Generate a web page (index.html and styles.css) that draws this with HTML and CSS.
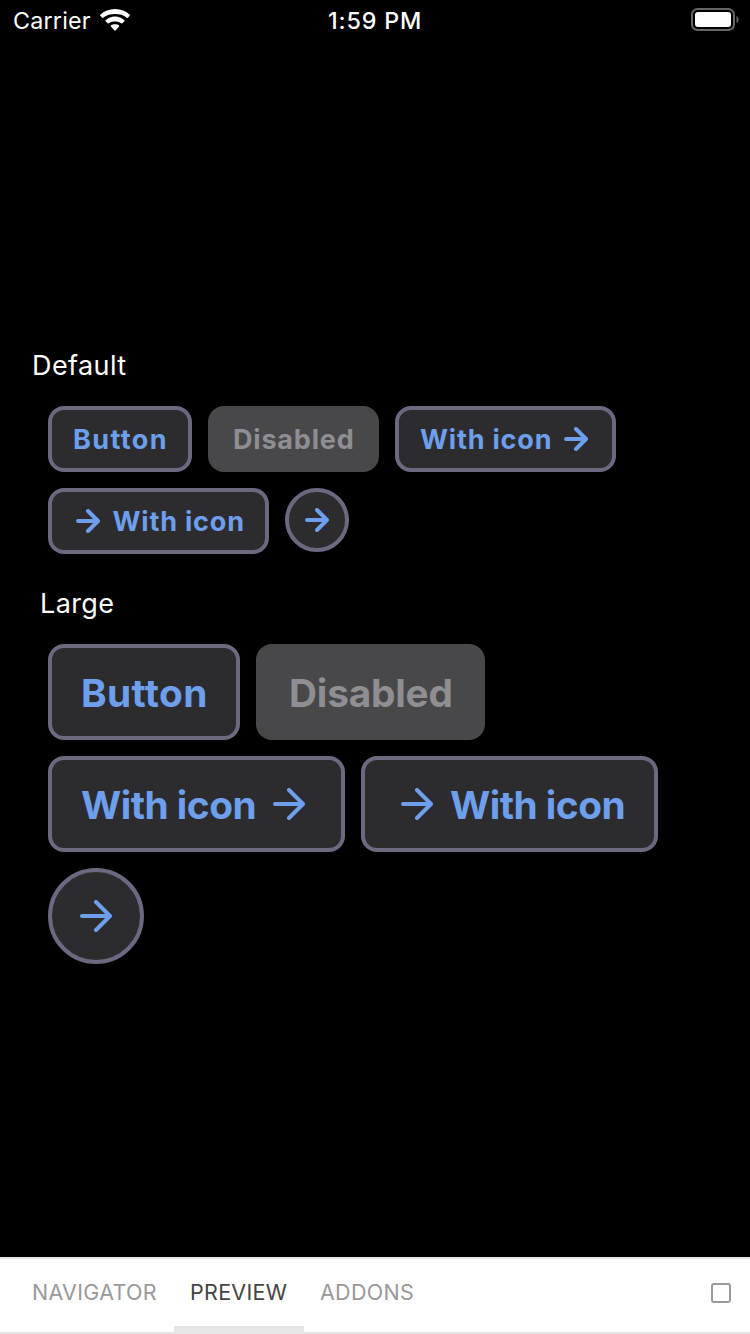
FILE: index.html
```html
<!DOCTYPE html>
<html lang="en">
<head>
<meta charset="utf-8">
<title>Buttons</title>
<link rel="stylesheet" href="styles.css">
</head>
<body>
<svg class="defs" width="0" height="0">
  <symbol id="arrow-small" viewBox="0 0 24 24"><path d="M2 12H22M12 2L22 12L12 22"/></symbol>
  <symbol id="arrow-large" viewBox="0 0 32 32"><path d="M2 16H30M16 2L30 16L16 30"/></symbol>
</svg>
<div class="screen">
  <header class="status">
    <div class="carrier">
      <span>Carrier</span>
      <svg class="wifi" viewBox="0 0 30 22">
        <path d="M15 0C9.200 0 4 2.100.3 5.800Q-.2 6.300.3 6.800L2.200 8.700Q2.700 9.200 3.200 8.700C6.400 5.900 10.500 4.900 15 4.900S23.600 5.900 26.800 8.700Q27.300 9.200 27.800 8.700L29.700 6.800Q30.200 6.300 29.700 5.800C26 2.100 20.800 0 15 0Z"/>
        <path d="M15 7.500C11.400 7.500 8.100 8.900 5.600 11.200Q5.100 11.700 5.600 12.200L7.700 14.200Q8.200 14.700 8.700 14.200C10.400 12.900 12.600 12.400 15 12.400S19.600 12.900 21.300 14.200Q21.800 14.700 22.300 14.200L24.400 12.200Q24.900 11.700 24.400 11.200C21.900 8.900 18.600 7.500 15 7.500Z"/>
        <path d="M15 15.200C13.400 15.200 12 15.700 10.900 16.600Q10.400 17.100 10.900 17.600L14.500 21.400Q15 21.900 15.500 21.400L19.100 17.600Q19.600 17.100 19.100 16.600C18 15.700 16.600 15.200 15 15.200Z"/>
      </svg>
    </div>
    <div class="clock">1:59 PM</div>
    <svg class="battery" viewBox="0 0 49 24">
      <rect class="shell" x="1" y="1" width="42" height="21" rx="5.500"/>
      <rect class="charge" x="4" y="4" width="36" height="15" rx="3"/>
      <path class="tip" d="M45.500 8C48.300 9.200 48.300 13.800 45.500 15Z"/>
    </svg>
  </header>

  <main class="story">
    <h2 class="label">Default</h2>
    <div class="buttons">
      <button class="btn w-button"><span>Button</span></button>
      <button class="btn w-disabled" disabled><span>Disabled</span></button>
      <button class="btn w-icon"><span>With icon</span><svg class="icon"><use href="#arrow-small"/></svg></button>
      <button class="btn w-icon lead"><svg class="icon"><use href="#arrow-small"/></svg><span>With icon</span></button>
      <button class="btn round" aria-label="Next"><svg class="icon"><use href="#arrow-small"/></svg></button>
    </div>
    <h2 class="label label-large">Large</h2>
    <div class="buttons large">
      <button class="btn w-button"><span>Button</span></button>
      <button class="btn w-disabled" disabled><span>Disabled</span></button>
      <button class="btn w-icon"><span>With icon</span><svg class="icon"><use href="#arrow-large"/></svg></button>
      <button class="btn w-icon lead"><svg class="icon"><use href="#arrow-large"/></svg><span>With icon</span></button>
      <button class="btn round" aria-label="Next"><svg class="icon"><use href="#arrow-large"/></svg></button>
    </div>
  </main>

  <nav class="tabs">
    <a class="tab navigator">NAVIGATOR</a>
    <a class="tab preview active">PREVIEW</a>
    <a class="tab addons">ADDONS</a>
    <span class="toggle"></span>
  </nav>
</div>
</body>
</html>
```
FILE: styles.css
```css
* { box-sizing: border-box; }
body {
  margin: 0;
  background: #000;
  color: #fff;
  font-family: Inter, "Liberation Sans", sans-serif;
}
.defs { display: block; height: 0; }
.screen { display: flex; flex-direction: column; width: 750px; height: 1334px; overflow: hidden; }

.status {
  display: grid;
  grid-template-columns: 315px 1fr 49px;
  height: 40px;
  padding: 0 10px 0 13px;
  font-size: 23.3px;
  line-height: 41px;
}
.carrier { display: flex; align-items: flex-start; letter-spacing: 0.2px; }
.carrier span { width: 87px; white-space: nowrap; }
.wifi { width: 30px; height: 22px; margin-top: 9px; fill: #fff; }
.clock { font-weight: 500; letter-spacing: 0.85px; white-space: nowrap; }
.battery { width: 49px; height: 24px; margin-top: 8px; }
.shell { fill: none; stroke: #676767; stroke-width: 2; }
.charge { fill: #fff; }
.tip { fill: #676767; }

.story { flex: 1; padding-top: 307px; }
.label {
  margin: 0;
  padding-left: 32px;
  height: 38px;
  font-size: 27px;
  font-weight: 400;
  line-height: 38px;
  letter-spacing: 0.4px;
}
.label-large { padding-left: 40px; margin-top: 31px; }
.buttons { display: flex; flex-wrap: wrap; align-items: flex-start; gap: 16px; padding: 21px 80px 0 48px; }
.btn {
  display: flex;
  align-items: center;
  height: 66px;
  margin: 0;
  padding: 0 0 0 21px;
  border: 4px solid #6b6880;
  border-radius: 16px;
  background: #2c2c2e;
  color: #6d9fec;
  font: 700 27px/34px Inter, "Liberation Sans", sans-serif;
  letter-spacing: 0.8px;
  white-space: nowrap;
}
.btn:disabled { border-color: #48484a; background: #48484a; color: #8e8e93; }
.w-button { width: 144px; letter-spacing: 1.4px; }
.w-disabled { width: 171px; }
.w-icon { width: 221px; }
.btn span { flex: 0 0 auto; padding-top: 2px; }
.icon {
  flex: none;
  width: 24px;
  height: 24px;
  fill: none;
  stroke: currentColor;
  stroke-width: 4;
  stroke-linecap: round;
  stroke-linejoin: round;
}
.w-icon span { width: 132px; }
.w-icon .icon { margin-left: 12px; }
.lead { padding-left: 24px; }
.lead .icon { margin: 0 12.5px 0 0; }
.round { width: 64px; height: 64px; padding: 0; justify-content: center; border-radius: 50%; }

.large .btn { height: 96px; padding-left: 28px; font-size: 38.8px; line-height: 48px; letter-spacing: -0.5px; }
.large .w-button { width: 192px; padding-left: 29px; letter-spacing: 0.4px; }
.large .w-disabled { width: 229px; padding-left: 29px; letter-spacing: -0.2px; }
.large .w-icon { width: 297px; }
.large .w-icon span { width: 177px; }
.large .lead { padding-left: 36px; }
.large .icon { width: 32px; height: 32px; }
.large .w-icon .icon { margin-left: 16px; }
.large .lead .icon { margin: 0 16px 0 0; }
.large .round { width: 96px; padding: 0; }

.tabs {
  display: flex;
  height: 77px;
  border-top: 2px solid #e6e6e6;
  border-bottom: 2px solid #e6e6e6;
  background: #fff;
  color: #999;
  font-size: 21.5px;
  line-height: 67px;
  letter-spacing: 0.28px;
}
.tab { height: 73px; padding-left: 16px; border-bottom: 6px solid transparent; white-space: nowrap; }
.active { border-color: #e6e6e6; color: #444; }
.navigator { width: 158px; margin-left: 16px; }
.preview { width: 130px; }
.addons { width: 130px; }
.toggle { width: 20px; height: 20px; margin: 24px 19px 0 auto; border: 2px solid #999; border-radius: 3px; }
```
